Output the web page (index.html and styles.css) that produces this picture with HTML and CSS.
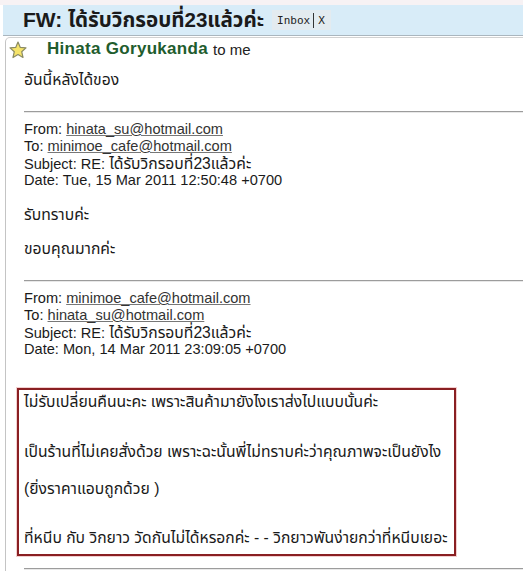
FILE: index.html
```html
<!DOCTYPE html>
<html lang="th">
<head>
<meta charset="utf-8">
<link rel="stylesheet" href="styles.css">
</head>
<body>
<div class="strip"></div>
<div class="header">
  <h1 class="title">FW: <span class="th-title">ได้รับวิกรอบที่23แล้วค่ะ</span></h1>
  <span class="label">Inbox <span class="sep"></span>X</span>
</div>
<div class="card">
  <div class="sender">
    <svg class="star" width="18" height="18" viewBox="0 0 18 18">
      <polygon points="9,1 11.3,6.4 17,6.9 12.7,10.7 14,16.5 9,13.5 4,16.5 5.3,10.7 1,6.9 6.7,6.4" fill="#f6e46a" stroke="#8b8b63" stroke-width="1.2" stroke-linejoin="round"/>
    </svg>
    <span class="name">Hinata Goryukanda</span>
    <span class="to">to me</span>
  </div>
  <div class="body">
    <div class="line"><span class="th">อันนี้หลังได้ของ</span></div>
    <hr class="rule r1">
    <div class="line">From: <a href="#">hinata_su@hotmail.com</a></div>
    <div class="line">To: <a href="#">minimoe_cafe@hotmail.com</a></div>
    <div class="line">Subject: RE: <span class="th">ได้รับวิกรอบที่23แล้วค่ะ</span></div>
    <div class="line">Date: Tue, 15 Mar 2011 12:50:48 +0700</div>
    <div class="line gap"><span class="th">รับทราบค่ะ</span></div>
    <div class="line gap"><span class="th">ขอบคุณมากค่ะ</span></div>
    <hr class="rule r2">
    <div class="line">From: <a href="#">minimoe_cafe@hotmail.com</a></div>
    <div class="line">To: <a href="#">hinata_su@hotmail.com</a></div>
    <div class="line">Subject: RE: <span class="th">ได้รับวิกรอบที่23แล้วค่ะ</span></div>
    <div class="line">Date: Mon, 14 Mar 2011 23:09:05 +0700</div>
    <div class="box">
      <div class="line"><span class="th">ไม่รับเปลี่ยนคืนนะคะ เพราะสินค้ามายังไงเราส่งไปแบบนั้นค่ะ</span></div>
      <div class="line b2"><span class="th">เป็นร้านที่ไม่เคยสั่งด้วย เพราะฉะนั้นพี่ไม่ทราบค่ะว่าคุณภาพจะเป็นยังไง</span></div>
      <div class="line b3"><span class="th">(ยิ่งราคาแอบถูกด้วย )</span></div>
      <div class="line b4"><span class="th">ที่หนีบ กับ วิกยาว วัดกันไม่ได้หรอกค่ะ - - วิกยาวพันง่ายกว่าที่หนีบเยอะ</span></div>
    </div>
    <hr class="rule r3">
  </div>
</div>
</body>
</html>
```

FILE: styles.css
```css
html, body {
  margin: 0;
  padding: 0;
  background: #ffffff;
  width: 523px;
  height: 571px;
  overflow: hidden;
  font-family: "Liberation Sans", Arial, "Noto Sans Thai", "Tahoma", sans-serif;
  color: #1a1a1a;
}

.strip {
  height: 5px;
  background: #f7f2f4;
}

.header {
  height: 30px;
  margin-left: 3px;
  background: #d8ecf8;
  border-bottom: 1px solid #aab6be;
  display: flex;
  align-items: center;
  padding-left: 20px;
}

.title {
  margin: 0;
  font-size: 21px;
  font-weight: bold;
  color: #1a1a1a;
  line-height: 30px;
  white-space: nowrap;
}

.th-title {
  font-size: 20.6px;
}

.label {
  margin-left: 8px;
  padding: 2px 6px 2px 5px;
  background: #e3ebf0;
  font-family: "DejaVu Sans Mono", monospace;
  font-size: 11px;
  color: #222;
  display: flex;
  align-items: center;
  height: 20px;
  box-sizing: border-box;
}

.sep {
  display: inline-block;
  width: 1px;
  height: 15px;
  background: #333;
  margin: 0 4px 0 3px;
}

.card {
  margin-top: 1px;
  margin-left: 5px;
  border-left: 1px solid #c4c4c4;
  border-top: 1px solid #d2d2d2;
  border-top-left-radius: 5px;
  height: 540px;
}

.sender {
  height: 22px;
  display: flex;
  align-items: center;
  padding-left: 3px;
}

.star {
  display: block;
  margin-top: 1px;
}

.name {
  margin-left: 20px;
  font-size: 17px;
  font-weight: bold;
  color: #215c2d;
  letter-spacing: 0.3px;
}

.to {
  margin-left: 5px;
  font-size: 15px;
  color: #222;
}

.body {
  padding-left: 18px;
  padding-top: 11px;
}

.line {
  font-size: 14.6px;
  line-height: 17px;
  height: 17px;
  white-space: nowrap;
}

.th {
  font-size: 15.7px;
}

.line a {
  color: #333;
  text-decoration: underline;
  text-decoration-color: #777;
}

.gap {
  margin-top: 17px;
}

.rule {
  margin: 0;
  border: 0;
  height: 0;
  border-top: 1px solid #9c9c9c;
  border-bottom: 1px solid #e8e8e8;
}

.r1 { margin-top: 23px; margin-bottom: 8px; }
.r2 { margin-top: 23px; margin-bottom: 8px; }
.r3 { margin-top: 12px; }

.box {
  margin-top: 30px;
  margin-left: -7px;
  width: 430px;
  border: 2px solid #8a1f22;
  box-shadow: 0 0 0 1px #f2cfcf;
  padding: 3px 0 8px 5px;
}

.b2 { margin-top: 33px; }
.b3 { margin-top: 20px; }
.b4 { margin-top: 32px; }
```
